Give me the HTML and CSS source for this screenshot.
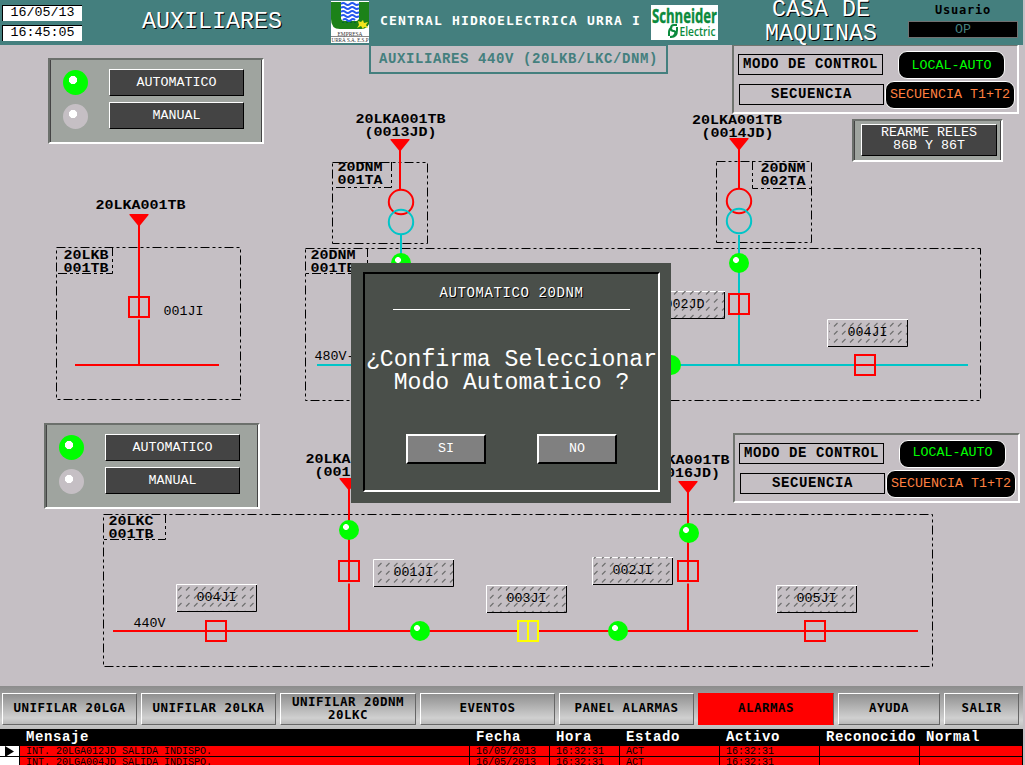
FILE: index.html
```html
<!DOCTYPE html>
<html lang="es">
<head>
<meta charset="utf-8">
<title>Central Hidroelectrica Urra I - Auxiliares</title>
<link rel="stylesheet" href="styles.css">
</head>
<body>
<div class="screen">
  <header class="header">
    <div class="clock"><span class="clock-field">16/05/13</span><span class="clock-field">16:45:05</span></div>
    <h1 class="big-title area-title">AUXILIARES</h1>
    <svg class="urra-logo" width="38" height="42" viewBox="0 0 38 42">
      <rect width="38" height="42" fill="#fff"/>
      <path d="M0 1H10V16Q10 20 14 20H24Q28 20 28 16V1H38V23Q36 28 30 28H9Q0 28 0 18Z" fill="#1c8218"/>
      <path d="M10 1H28V16Q28 20 24 20H14Q10 20 10 16Z" fill="#fff"/>
      <path d="M10 3q2.200-2 4.500 0t4.500 0t4.500 0t4.500 0M10 7q2.200-2 4.500 0t4.500 0t4.500 0t4.500 0M10 11q2.200-2 4.500 0t4.500 0t4.500 0t4.500 0M10 15q2.200-2 4.500 0t4.500 0t4.500 0t4.500 0M12 19q2-2 4 0t4 0t4 0" fill="none" stroke="#2457f0" stroke-width="2"/>
      <path d="M11 21.500h15" stroke="#063" stroke-dasharray="2 2"/>
      <path d="M27 20l3 1 2-2 1 3 4-1-2 3 2 3-4-1-1 2-2-3-4 2 2-3z" fill="#f2e51e"/>
      <text class="urra-text" x="6.500" y="34.500" textLength="25" lengthAdjust="spacingAndGlyphs">EMPRESA</text>
      <path d="M0 35.500h38" stroke="#888"/>
      <text class="urra-text" x="0.500" y="41" textLength="37" lengthAdjust="spacingAndGlyphs">URRÁ S.A. E.S.P</text>
    </svg>
    <div class="plant-name">CENTRAL HIDROELECTRICA URRA I</div>
    <svg class="schneider-logo" width="67" height="35" viewBox="0 0 67 35">
      <rect width="67" height="35" fill="#fff"/>
      <text class="brand" x="1" y="18" font-size="20" textLength="65" lengthAdjust="spacingAndGlyphs">Schneider</text>
      <text class="brand-sub" x="28.500" y="31" font-size="13" textLength="36" lengthAdjust="spacingAndGlyphs">Electric</text>
      <path d="M26 20h-3q-3 0-3 3t2.500 3t1.500 3q-1 3-5 3M26 22v3q0 7-6 7M18 31v-4q0-3 3-5" fill="none" stroke="#0b8a3c" stroke-width="2"/>
    </svg>
    <h2 class="big-title house-title">CASA DE<br>MAQUINAS</h2>
    <div class="user"><span class="user-label">Usuario</span><span class="user-value">OP</span></div>
  </header>

  <main class="stage">
    <svg class="schematic" width="1025" height="641" viewBox="0 45 1025 641">
      <defs>
        <pattern id="hatch" width="8" height="8" patternUnits="userSpaceOnUse">
          <path d="M2 6.500L5.500 3" stroke="#707070" stroke-width="1.200"/>
        </pattern>
        <g id="led"><circle r="10" fill="#0f0"/><path d="M-4-6h2l2 2v2l-2 2h-2l-2-2v-2z" fill="#fff"/></g>
        <path id="arrow" d="M-9.500 0H9.500V1L1 11.500H-1L-9.500 1Z" fill="#f00"/>
        <rect id="breaker" x="-10" y="-10" width="20" height="20" fill="none" stroke-width="2"/>
        <g id="tag">
          <path d="M0.500 28V0.500H81" fill="none" stroke="#fff"/>
          <path d="M1 27.500H80.500V1" fill="none" stroke="#000"/>
        </g>
      </defs>

      <g class="zone">
        <path d="M56.500 247.500H240.500V399.500H56.500Z"/><path d="M112.500 247V273.500H56"/>
        <path d="M332.500 162.500H427.500V243.500H332.500Z"/><path d="M391.500 162V187.500H332"/>
        <path d="M305.500 248.500H980.500V400.500H305.500Z"/><path d="M367.500 248V273.500H305"/>
        <path d="M716.500 161.500H811.500V242.500H716.500Z"/><path d="M752.500 161V188.500H812"/>
        <path d="M103.500 514.500H932.500V666.500H103.500Z"/><path d="M165.500 514V539.500H103"/>
      </g>

      <g class="wire live">
        <path d="M139 224V318M139 319.500V365M75 365H219"/>
        <path d="M400 148V190M739 147V189"/>
        <circle cx="401" cy="202" r="12.200"/><circle cx="739" cy="201" r="12.200"/>
        <path d="M349 487V582M349 583.500V631M688 490V582M688 583.500V631M113 631H918"/>
      </g>
      <g class="wire aux">
        <path d="M317 365H968M401 234V254M739 235V365"/>
        <circle cx="401" cy="222" r="12.200"/><circle cx="739" cy="221" r="12.200"/>
      </g>
      <use href="#arrow" x="139" y="214"/><use href="#arrow" x="400" y="139"/><use href="#arrow" x="739" y="138"/>
      <use href="#arrow" x="349" y="478"/><use href="#arrow" x="688" y="481"/>

      <g class="gap"><path d="M517 631H539"/></g>
      <g stroke="#f00" stroke-width="2">
        <path d="M205 631H227M804 631H826M854 365H876M739 293V315"/>
        <use href="#breaker" x="139" y="307"/><use href="#breaker" x="739" y="304"/><use href="#breaker" x="865" y="365"/>
        <use href="#breaker" x="349" y="571"/><use href="#breaker" x="688" y="571"/>
        <use href="#breaker" x="216" y="631"/><use href="#breaker" x="815" y="631"/>
      </g>
      <g stroke="#ff0" stroke-width="2"><use href="#breaker" x="528" y="631"/><path d="M528 620V642"/></g>

      <use href="#led" x="401" y="263"/><use href="#led" x="739" y="263"/><use href="#led" x="671" y="365"/>
      <use href="#led" x="349" y="530"/><use href="#led" x="689" y="533"/><use href="#led" x="420" y="631"/><use href="#led" x="618" y="631"/>

      <use href="#tag" x="644" y="291"/><use href="#tag" x="827" y="319"/><use href="#tag" x="176" y="584"/><use href="#tag" x="373" y="559"/>
      <use href="#tag" x="486" y="585"/><use href="#tag" x="592" y="557"/><use href="#tag" x="776" y="585"/>
      <g fill="url(#hatch)">
        <rect x="644" y="291" width="80" height="27"/><rect x="829" y="322" width="78" height="24"/><rect x="176" y="586" width="80" height="25"/>
        <rect x="375" y="562" width="78" height="24"/><rect x="486" y="586" width="80" height="26"/><rect x="592" y="557" width="80" height="27"/><rect x="776" y="586" width="80" height="26"/>
      </g>

      <g class="name">
        <text x="95.500" y="209" textLength="90" lengthAdjust="spacingAndGlyphs">20LKA001TB</text>
        <text x="355.500" y="123" textLength="90" lengthAdjust="spacingAndGlyphs">20LKA001TB</text>
        <text x="364.500" y="136" textLength="72" lengthAdjust="spacingAndGlyphs">(0013JD)</text>
        <text x="692" y="124" textLength="90" lengthAdjust="spacingAndGlyphs">20LKA001TB</text>
        <text x="701.500" y="137" textLength="72" lengthAdjust="spacingAndGlyphs">(0014JD)</text>
        <text x="305.500" y="463" textLength="90" lengthAdjust="spacingAndGlyphs">20LKA001TB</text>
        <text x="314.500" y="476" textLength="72" lengthAdjust="spacingAndGlyphs">(0015JD)</text>
        <text x="639.500" y="464" textLength="90" lengthAdjust="spacingAndGlyphs">20LKA001TB</text>
        <text x="648" y="477" textLength="72" lengthAdjust="spacingAndGlyphs">(0016JD)</text>
        <text x="63.500" y="259" textLength="45" lengthAdjust="spacingAndGlyphs">20LKB</text>
        <text x="63.500" y="272" textLength="45" lengthAdjust="spacingAndGlyphs">001TB</text>
        <text x="337.500" y="171" textLength="45" lengthAdjust="spacingAndGlyphs">20DNM</text>
        <text x="337.500" y="184" textLength="45" lengthAdjust="spacingAndGlyphs">001TA</text>
        <text x="310.500" y="259" textLength="45" lengthAdjust="spacingAndGlyphs">20DNM</text>
        <text x="310.500" y="272" textLength="45" lengthAdjust="spacingAndGlyphs">001TB</text>
        <text x="760.500" y="172" textLength="45" lengthAdjust="spacingAndGlyphs">20DNM</text>
        <text x="760.500" y="185" textLength="45" lengthAdjust="spacingAndGlyphs">002TA</text>
        <text x="108.500" y="525" textLength="45" lengthAdjust="spacingAndGlyphs">20LKC</text>
        <text x="108.500" y="538" textLength="45" lengthAdjust="spacingAndGlyphs">001TB</text>
      </g>
      <g class="device">
        <text x="163.500" y="315">001JI</text>
        <text x="664.500" y="308">002JD</text>
        <text x="847.500" y="336">004JI</text>
        <text x="196.500" y="601">004JI</text>
        <text x="393.500" y="576">001JI</text>
        <text x="506.500" y="602">003JI</text>
        <text x="612.500" y="574">002JI</text>
        <text x="796.500" y="602">005JI</text>
        <text x="314.500" y="360">480V-</text>
        <text x="133.500" y="627">440V</text>
      </g>
    </svg>

    <div class="subtitle">AUXILIARES 440V (20LKB/LKC/DNM)</div>

    <section class="panel selector selector-top">
      <i class="lamp lamp-on"></i><button class="dark-button">AUTOMATICO</button>
      <i class="lamp lamp-off"></i><button class="dark-button">MANUAL</button>
    </section>
    <section class="panel selector selector-bottom">
      <i class="lamp lamp-on"></i><button class="dark-button">AUTOMATICO</button>
      <i class="lamp lamp-off"></i><button class="dark-button">MANUAL</button>
    </section>

    <section class="mode mode-top">
      <div class="mode-labels"><span class="mode-label">MODO DE CONTROL</span><span class="mode-label shifted">SECUENCIA</span></div>
      <div class="mode-values"><span class="pill pill-green">LOCAL-AUTO</span><span class="pill pill-orange">SECUENCIA T1+T2</span></div>
    </section>
    <section class="mode mode-bottom">
      <div class="mode-labels"><span class="mode-label">MODO DE CONTROL</span><span class="mode-label shifted">SECUENCIA</span></div>
      <div class="mode-values"><span class="pill pill-green raised">LOCAL-AUTO</span><span class="pill pill-orange">SECUENCIA T1+T2</span></div>
    </section>

    <section class="panel reset"><button class="dark-button reset-button">REARME RELES<br>86B Y 86T</button></section>

    <section class="dialog" role="dialog">
      <div class="dialog-frame">
        <h3 class="dialog-title">AUTOMATICO 20DNM</h3>
        <p class="dialog-text">¿Confirma Seleccionar<br>Modo Automatico ?</p>
        <div class="dialog-actions"><button class="dialog-button">SI</button><button class="dialog-button">NO</button></div>
      </div>
    </section>
  </main>

  <nav class="nav">
    <button class="nav-button">UNIFILAR 20LGA</button>
    <button class="nav-button">UNIFILAR 20LKA</button>
    <button class="nav-button">UNIFILAR 20DNM<br>20LKC</button>
    <button class="nav-button">EVENTOS</button>
    <button class="nav-button">PANEL ALARMAS</button>
    <button class="nav-button nav-alarm">ALARMAS</button>
    <button class="nav-button">AYUDA</button>
    <button class="nav-button">SALIR</button>
  </nav>

  <div class="alarms">
    <div class="alarm-row alarm-head"><span></span><span>Mensaje</span><span>Fecha</span><span>Hora</span><span>Estado</span><span>Activo</span><span>Reconocido</span><span>Normal</span></div>
    <div class="alarm-row alarm-item"><span class="marker"><svg width="19" height="11" viewBox="0 0 19 11"><path d="M5 0L14 5.500L5 11Z"/></svg></span><span>INT. 20LGA012JD SALIDA INDISPO.</span><span>16/05/2013</span><span>16:32:31</span><span>ACT</span><span>16:32:31</span><span></span><span></span></div>
    <div class="alarm-row alarm-item"><span class="marker"></span><span>INT. 20LGA004JD SALIDA INDISPO.</span><span>16/05/2013</span><span>16:32:31</span><span>ACT</span><span>16:32:31</span><span></span><span></span></div>
  </div>
</div>
</body>
</html>
```
FILE: styles.css
```css
* { box-sizing: border-box; }

body {
  margin: 0;
  background: #c5bfc4;
  font-family: "Liberation Mono", monospace;
  font-size: 13.33px;
  line-height: 13px;
  color: #000;
}

button {
  font: inherit;
  padding: 0;
  margin: 0;
  border-radius: 0;
}

h1, h2, h3, p { margin: 0; font-weight: normal; }

.screen {
  width: 1025px;
  height: 765px;
  overflow: hidden;
  display: flex;
  flex-direction: column;
}

/* header */
.header {
  width: 1023px;
  height: 45px;
  flex: none;
  display: flex;
  align-items: flex-start;
  background: #447f7e;
}

.clock {
  width: 80px;
  margin: 5px 0 0 2px;
  display: flex;
  flex-direction: column;
  gap: 4px;
}

.clock-field {
  height: 16px;
  background: #fff;
  border: solid #000;
  border-width: 1px 0 0 1px;
  text-align: center;
  line-height: 14px;
}

.big-title {
  font-size: 23.33px;
  line-height: 24px;
  color: #fff;
  text-shadow: 1px 1px 0 #000;
  text-align: center;
}

.area-title { width: 140px; margin: 10px 0 0 60px; }

.urra-logo { margin: 1px 0 0 49px; }

.urra-text { font: 6px "Liberation Serif", serif; fill: #333; }

.plant-name {
  width: 262px;
  margin: 14px 0 0 11px;
  font-family: "DejaVu Sans Mono", monospace;
  font-weight: bold;
  font-size: 13px;
  letter-spacing: 1.174px;
  color: #fff;
  white-space: nowrap;
}

.schneider-logo { margin: 5px 0 0 9px; }

.brand, .brand-sub { font-family: "Open Sans", sans-serif; font-weight: bold; fill: #0b8a3c; }

.brand { stroke: #0b8a3c; stroke-width: 0.4; }

.brand-sub { font-weight: 600; }

.house-title { width: 114px; margin: -2px 0 0 46px; }

.user {
  width: 110px;
  margin: 4px 0 0 30px;
  display: flex;
  flex-direction: column;
  gap: 4px;
  text-align: center;
}

.user-label { font-family: "DejaVu Sans Mono", monospace; font-weight: bold; font-size: 12px; letter-spacing: 0.78px; }

.user-value {
  height: 17px;
  background: #000;
  border: 1px solid #707070;
  color: #447f7e;
  line-height: 15px;
}

/* diagram canvas */
.stage { position: relative; height: 641px; flex: none; overflow: hidden; }

.schematic { display: block; }

.zone path { fill: none; stroke: #000; stroke-dasharray: 9 3 3 3 3 3; }

.wire { fill: none; stroke-width: 2; }
.aux { stroke: #00c5c8; }
.live { stroke: #f00; }
.gap { stroke: #c5bfc4; stroke-width: 2; }

.name { font-size: 13.5px; font-weight: bold; }

.device { font-size: 13.33px; }

.subtitle {
  position: absolute;
  left: 369px;
  top: -1px;
  width: 299px;
  height: 30px;
  border: 2px solid #447f7e;
  color: #447f7e;
  font-weight: bold;
  font-size: 14px;
  letter-spacing: 0.6px;
  line-height: 27px;
  text-align: center;
  white-space: nowrap;
}

.panel {
  position: absolute;
  background: #9fa49f;
  border: 2px solid;
  border-color: #6c706c #fff #fff #6c706c;
  box-shadow: inset -1px 0 0 #444, inset 1px 0 0 #444;
}

.selector {
  width: 216px;
  height: 86px;
  padding: 9px 18px 0 13px;
  display: grid;
  grid-template-columns: 25px 135px;
  grid-auto-rows: 27px;
  column-gap: 21px;
  row-gap: 6px;
}

.selector-top { left: 48px; top: 13px; }
.selector-bottom { left: 44px; top: 378px; }

.lamp {
  width: 25px;
  height: 25px;
  margin-top: 1px;
  border-radius: 50%;
}

.lamp-on { background: radial-gradient(circle at 10px 10px, #fff 3.8px, #0f0 4.4px); }

.lamp-off {
  margin-top: 2px;
  background: radial-gradient(circle at 10px 10px, #fff 3.8px, #c5bfc4 4.4px);
}

.dark-button {
  background: #444;
  color: #fff;
  border: 1px solid;
  border-color: #fff #000 #000 #fff;
}

.reset { left: 852px; top: 74px; width: 151px; height: 43px; padding: 3px 0 0 7px; }

.reset-button { width: 136px; height: 32px; display: block; padding-bottom: 2px; }

.mode {
  position: absolute;
  width: 287px;
  height: 70px;
  border: 2px solid;
  border-color: #70746f #fff #fff #70746f;
  display: flex;
}

.mode-top { left: 732px; top: -1px; }
.mode-bottom { left: 733px; top: 388px; }

.mode-labels { width: 151px; padding: 8px 0 0 4px; display: flex; flex-direction: column; gap: 9px; }

.mode-label {
  width: 145px;
  height: 21px;
  border: 1px solid #000;
  font-weight: bold;
  font-size: 14px;
  letter-spacing: 0.6px;
  line-height: 18px;
  text-align: center;
  white-space: nowrap;
}

.shifted { margin-left: 1px; }

.mode-values { width: 130px; flex: none; padding-top: 5px; display: flex; flex-direction: column; gap: 2px; }

.pill {
  height: 28px;
  flex: none;
  background: #000;
  border: 1px solid #fff;
  border-radius: 9px;
  line-height: 27px;
  text-align: center;
  white-space: nowrap;
}

.pill-green { width: 107px; margin-left: 13px; color: #0f0; }
.raised { line-height: 24px; }
.pill-orange { width: 130px; color: #ff8040; line-height: 26px; }

/* confirmation dialog */
.dialog {
  position: absolute;
  left: 351px;
  top: 218px;
  width: 320px;
  height: 240px;
  padding: 9px 11px 11px 12px;
  background: #4a4f4a;
}

.dialog-frame {
  height: 220px;
  border: 2px solid;
  border-color: #000 #fff #fff #000;
  display: flex;
  flex-direction: column;
  align-items: center;
  color: #fff;
}

.dialog-title {
  width: 237px;
  height: 36px;
  padding-top: 13px;
  border-bottom: 1px solid #fff;
  font-size: 14px;
  letter-spacing: 0.6px;
  text-align: center;
  text-shadow: 1px 1px 0 #000;
}

.dialog-text {
  width: 292px;
  margin-top: 39px;
  font-size: 23.1px;
  line-height: 23px;
  text-align: center;
  white-space: nowrap;
}

.dialog-actions { margin-top: 39px; display: flex; gap: 51px; }

.dialog-button {
  width: 80px;
  height: 30px;
  padding-bottom: 2px;
  background: #808080;
  color: #fff;
  border: 2px solid;
  border-color: #fff #000 #000 #fff;
}

/* navigation */
.nav {
  width: 1023px;
  height: 43px;
  flex: none;
  padding: 7px 4px 0 2px;
  display: grid;
  grid-template-columns: 135px 135px 136px 135px 135px 136px 102px 75px;
  column-gap: 4px;
  background: linear-gradient(#8c8c8c, #b4b4b4 50%, #d2d2d2 80%, #bcbcbc);
}

.nav-button {
  height: 32px;
  border: 1px solid;
  border-color: #fff #666 #666 #fff;
  background: linear-gradient(#909090, #d0d0d0 80%, #b8b8b8);
  font-family: "DejaVu Sans Mono", monospace;
  font-weight: bold;
  font-size: 12.5px;
  letter-spacing: 0.475px;
  line-height: 13px;
  padding-bottom: 3px;
  white-space: nowrap;
}

.nav-alarm { background: #f00; border-color: #f00 #666 #f00 #f00; }

/* alarm list */
.alarms { width: 1023px; height: 36px; overflow: hidden; background: #000; }

.alarm-row {
  display: grid;
  grid-template-columns: 19px 449px 79px 69px 99px 99px 99px 102px;
  column-gap: 1px;
  white-space: nowrap;
}

.alarm-row span { padding-left: 6px; overflow: hidden; }

.alarm-head {
  height: 17px;
  color: #fff;
  font-weight: bold;
  font-size: 14px;
  letter-spacing: 0.6px;
  line-height: 16px;
}

.alarm-item { height: 10px; margin-bottom: 1px; font-size: 10px; line-height: 11px; }

.alarm-item span { background: #f00; }

.alarm-item .marker { background: #fff; padding: 0; }

.marker svg { display: block; }
```
